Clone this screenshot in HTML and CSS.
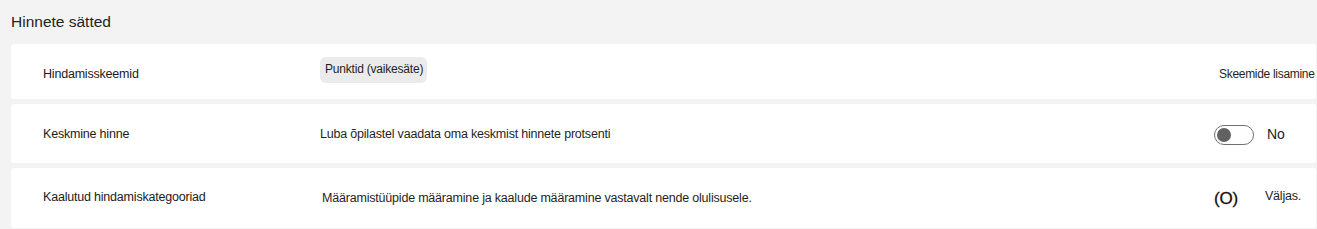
FILE: index.html
```html
<!DOCTYPE html>
<html lang="et">
<head>
<meta charset="utf-8">
<title>Hinnete sätted</title>
<link rel="stylesheet" href="styles.css">
</head>
<body>
<div class="page">
  <h1 class="title">Hinnete sätted</h1>
  <div class="cards">
    <div class="card card-1">
      <div class="label">Hindamisskeemid</div>
      <div class="desc"><span class="chip">Punktid (vaikesäte)</span></div>
      <div class="action"><span class="link">Skeemide lisamine</span></div>
    </div>
    <div class="card card-2">
      <div class="label">Keskmine hinne</div>
      <div class="desc">Luba õpilastel vaadata oma keskmist hinnete protsenti</div>
      <div class="action">
        <span class="toggle"><span class="knob"></span></span>
        <span class="state">No</span>
      </div>
    </div>
    <div class="card card-3">
      <div class="label">Kaalutud hindamiskategooriad</div>
      <div class="desc desc-3">Määramistüüpide määramine ja kaalude määramine vastavalt nende olulisusele.</div>
      <div class="action">
        <span class="radio">(O)</span>
        <span class="state state-3">Väljas.</span>
      </div>
    </div>
  </div>
</div>
</body>
</html>
```

FILE: styles.css
```css
html, body {
  margin: 0;
  padding: 0;
  background: #f3f3f3;
}
body {
  font-family: "Liberation Sans", Arial, sans-serif;
  color: #1f1f1f;
}
.page {
  padding: 0 1px 0 11px;
}
.title {
  margin: 0;
  padding-top: 12px;
  height: 44px;
  box-sizing: border-box;
  font-size: 15.5px;
  font-weight: normal;
  line-height: 19px;
  color: #242424;
}
.cards {
  display: flex;
  flex-direction: column;
  gap: 5px;
}
.card {
  background: #ffffff;
  border-radius: 3px;
  display: grid;
  grid-template-columns: 277px 1fr 102px;
  align-items: center;
  padding: 0 0 0 32px;
  font-size: 12.5px;
  letter-spacing: -0.2px;
}
.card-1 { height: 55px; }
.card-2 { height: 59px; }
.card-3 { height: 60px; }
.label {
  color: #1b1b1b;
}
.card-1 .label { padding-top: 4px; }
.card-3 .label { margin-top: -2px; }
.chip {
  display: inline-block;
  background: #ebebeb;
  border-radius: 6px;
  padding: 5px 4px 6px 5px;
  line-height: 15px;
  font-size: 12px;
  margin-top: -3px;
}
.desc-3 { padding-left: 2px; }
.action {
  display: flex;
  align-items: center;
}
.link {
  padding-left: 5px;
  padding-top: 4px;
  font-size: 12px;
  letter-spacing: -0.3px;
}
.toggle {
  width: 40px;
  height: 20px;
  box-sizing: border-box;
  border: 1px solid #707070;
  border-radius: 10px;
  display: flex;
  align-items: center;
  padding-left: 2px;
  margin-top: 2px;
}
.knob {
  width: 14px;
  height: 14px;
  border-radius: 50%;
  background: #616161;
}
.state {
  margin-left: 13px;
  font-size: 14px;
  color: #242424;
}
.radio {
  font-size: 17px;
  font-weight: normal;
  color: #111;
  margin-top: 2px;
  -webkit-text-stroke: 0.3px #111;
}
.state-3 {
  margin-left: 27px;
  font-size: 12.5px;
  margin-top: -5px;
}
```
